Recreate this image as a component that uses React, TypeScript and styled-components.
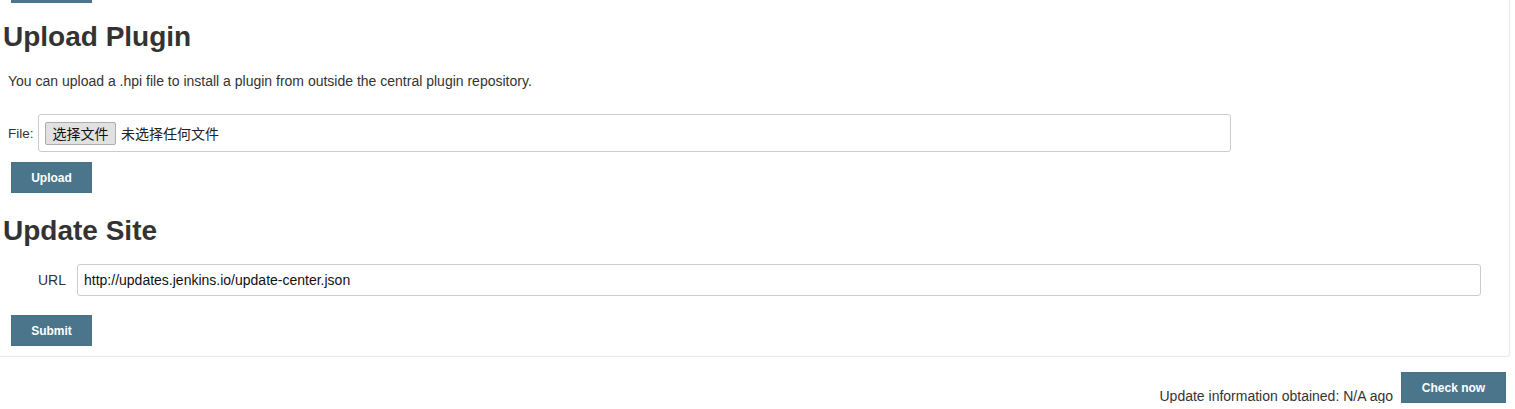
import styled, { createGlobalStyle } from "styled-components";

const GlobalStyle = createGlobalStyle`
  body {
    margin: 0;
    background: #fff;
    color: #333;
    font-family: "Liberation Sans", Arial, Helvetica, sans-serif;
  }
`;

export default function App() {
  return (
    <>
      <GlobalStyle />
      <Panel>
        <TopButton />
        <Heading>Upload Plugin</Heading>
        <Description>
          You can upload a .hpi file to install a plugin from outside the
          central plugin repository.
        </Description>
        <FileRow>
          <FileLabel>File:</FileLabel>
          <FileBox>
            <FileButton>选择文件</FileButton>
            <FileStatus>未选择任何文件</FileStatus>
          </FileBox>
        </FileRow>
        <ActionButton>Upload</ActionButton>

        <Heading $gap={22}>Update Site</Heading>
        <UrlRow>
          <UrlLabel>URL</UrlLabel>
          <UrlInput defaultValue="http://updates.jenkins.io/update-center.json" />
        </UrlRow>
        <ActionButton $gap={19}>Submit</ActionButton>
      </Panel>

      <StatusBar>
        <StatusText>Update information obtained: N/A ago</StatusText>
        <CheckButton>Check now</CheckButton>
      </StatusBar>
    </>
  );
}

const Panel = styled.div`
  width: 1510px;
  box-sizing: border-box;
  padding: 0 0 10px 3px;
  border-right: 1px solid #e8e8e8;
  border-bottom: 1px solid #e8e8e8;
  border-bottom-right-radius: 4px;
`;

const TopButton = styled.div`
  width: 81px;
  height: 31px;
  margin: -28px 0 0 8px;
  background: #4b758b;
`;

const Heading = styled.h1<{ $gap?: number }>`
  margin: ${(p) => p.$gap ?? 18}px 0 0;
  font-size: 28px;
  line-height: 32px;
  font-weight: bold;
  color: #333;
`;

const Description = styled.p`
  margin: 20px 0 0 5px;
  font-size: 14px;
  line-height: 16px;
`;

const FileRow = styled.div`
  display: flex;
  align-items: center;
  margin: 25px 0 0 5px;
`;

const FileLabel = styled.span`
  width: 30px;
  font-size: 13.5px;
`;

const FileBox = styled.div`
  display: flex;
  align-items: center;
  gap: 5px;
  width: 1193px;
  height: 38px;
  box-sizing: border-box;
  padding: 0 6px;
  border: 1px solid #ccc;
  border-radius: 3px;
  font-family: "Liberation Sans", "Noto Sans CJK SC", sans-serif;
  font-size: 14px;
`;

const FileButton = styled.span`
  display: flex;
  align-items: center;
  justify-content: center;
  width: 71px;
  height: 23px;
  box-sizing: border-box;
  border: 1px solid #adadad;
  border-radius: 2px;
  background: #e1e1e1;
  color: #111;
`;

const FileStatus = styled.span`
  color: #222;
`;

const ActionButton = styled.button<{ $gap?: number }>`
  display: block;
  width: 81px;
  height: 31px;
  margin: ${(p) => p.$gap ?? 10}px 0 0 8px;
  padding: 0;
  border: 1px solid #4a7285;
  background: #4b758b;
  color: #fff;
  font-family: "Liberation Sans", Arial, sans-serif;
  font-size: 12px;
  font-weight: bold;
`;

const UrlRow = styled.div`
  display: flex;
  align-items: center;
  gap: 11px;
  margin: 17px 0 0 35px;
`;

const UrlLabel = styled.span`
  font-size: 14px;
`;

const UrlInput = styled.input`
  width: 1404px;
  height: 32px;
  box-sizing: border-box;
  padding: 0 6px;
  border: 1px solid #ccc;
  border-radius: 3px;
  font-family: "Liberation Sans", Arial, sans-serif;
  font-size: 14px;
  color: #111;
  outline: none;
`;

const StatusBar = styled.div`
  display: flex;
  justify-content: flex-end;
  align-items: flex-end;
  gap: 8px;
  margin-top: 15px;
  padding-right: 9px;
`;

const StatusText = styled.span`
  font-size: 14px;
  line-height: 16px;
  margin-bottom: -1px;
`;

const CheckButton = styled.button`
  width: 105px;
  height: 31px;
  padding: 0;
  border: 1px solid #4a7285;
  background: #4b758b;
  color: #fff;
  font-family: "Liberation Sans", Arial, sans-serif;
  font-size: 12px;
  font-weight: bold;
`;
